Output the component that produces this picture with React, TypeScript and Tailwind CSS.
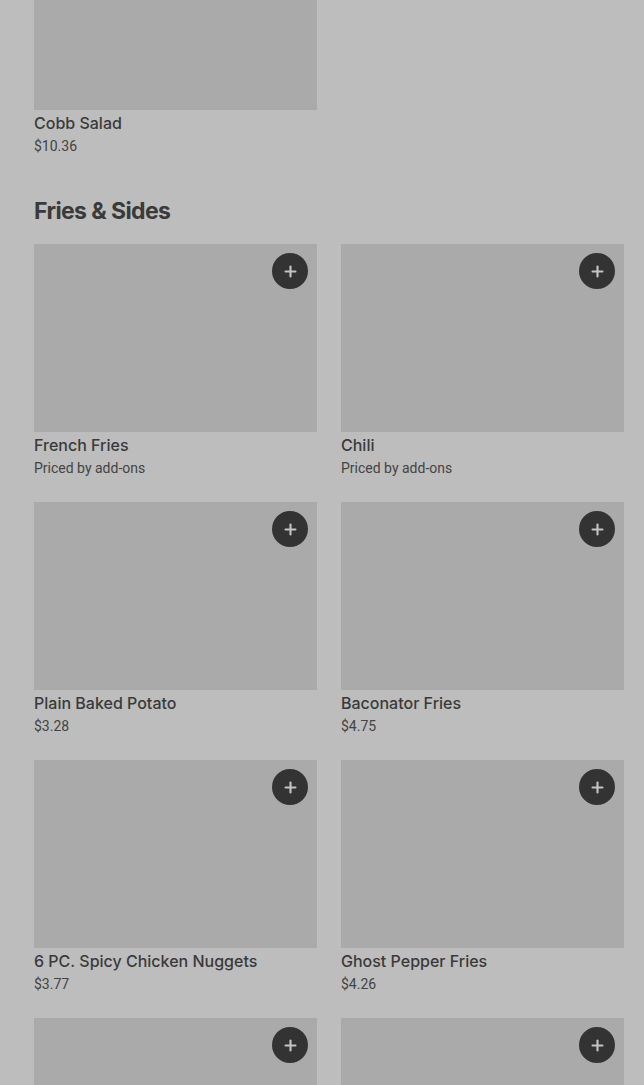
import { Plus } from "lucide-react";

type Item = { name: string; price: string };

const sides: Item[] = [
  { name: "French Fries", price: "Priced by add-ons" },
  { name: "Chili", price: "Priced by add-ons" },
  { name: "Plain Baked Potato", price: "$3.28" },
  { name: "Baconator Fries", price: "$4.75" },
  { name: "6 PC. Spicy Chicken Nuggets", price: "$3.77" },
  { name: "Ghost Pepper Fries", price: "$4.26" },
  { name: "Apple Bites", price: "$1.99" },
  { name: "Side Caesar Salad", price: "$3.49" },
];

const ItemCard = ({ item, addButton = true }: { item: Item; addButton?: boolean }) => (
  <div className="flex flex-col">
    <div className="relative h-[188px] bg-[#aaaaaa]">
      {addButton && (
        <button className="absolute right-[9px] top-[9px] flex h-9 w-9 items-center justify-center rounded-full bg-[#333333] text-[#c4c4c4]">
          <Plus size={17} strokeWidth={3} />
        </button>
      )}
    </div>
    <h3 className="mt-px text-[16px] font-medium leading-6 text-[#3a3a3a]">{item.name}</h3>
    <p
      className="mt-px text-[14px] leading-5 text-[#444444]"
      style={{ fontFamily: "Roboto, 'Noto Sans', sans-serif" }}
    >
      {item.price}
    </p>
  </div>
);

export default function App() {
  return (
    <div
      className="h-[1085px] overflow-hidden bg-[#bdbdbd] pl-[34px] pr-[20px]"
      style={{ fontFamily: "Inter, 'Noto Sans', sans-serif" }}
    >
      <div className="-mt-[78px] grid grid-cols-2 gap-x-6">
        <ItemCard item={{ name: "Cobb Salad", price: "$10.36" }} addButton={false} />
      </div>

      <h2 className="mt-[39px] text-[23px] font-bold leading-8 tracking-[-0.6px] text-[#3a3a3a]">
        Fries &amp; Sides
      </h2>

      <div className="mt-[17px] grid grid-cols-2 gap-x-6 gap-y-6">
        {sides.map((item) => (
          <ItemCard key={item.name} item={item} />
        ))}
      </div>
    </div>
  );
}
